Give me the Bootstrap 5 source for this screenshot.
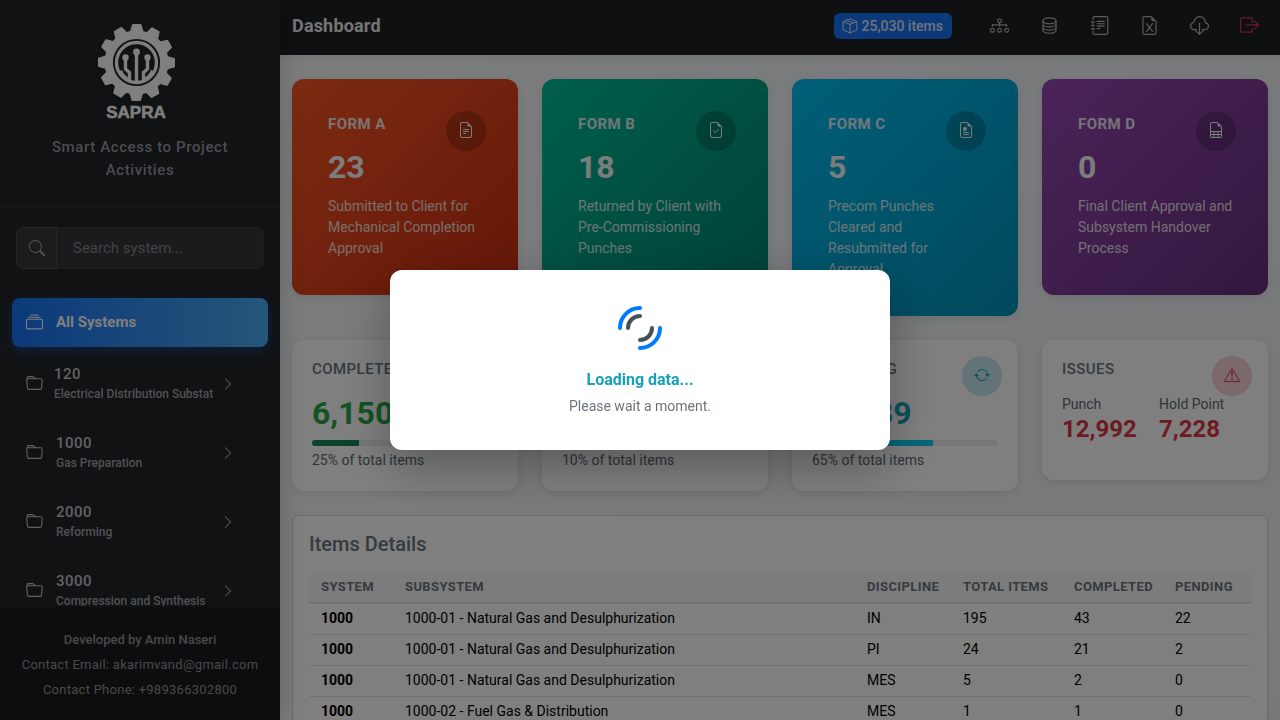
<!DOCTYPE html>
<html lang="en">
<head>
<meta charset="utf-8">
<meta name="viewport" content="width=device-width, initial-scale=1">
<title>SAPRA Dashboard</title>
<link href="https://cdn.jsdelivr.net/npm/bootstrap@5.3.0/dist/css/bootstrap.min.css" rel="stylesheet">
<style>
  body { font-family: Roboto, "Liberation Sans", sans-serif; background: #f8f9fa; }
  .icon { width: 16px; height: 16px; fill: currentColor; flex-shrink: 0; display: block; }
  .icon-lg { width: 19px; height: 19px; }

  .side-bar { width: 280px; background: #212529; box-shadow: 4px 0 20px rgba(0,0,0,.15); z-index: 2; }
  .side-head { padding: 24px 24px; background: linear-gradient(135deg, #1f2327, #212529); border-bottom: 1px solid #32363a; }
  .side-logo { width: 84px; height: 96px; overflow: visible; }
  .tagline { font-size: 15px; line-height: 23px; font-weight: 500; letter-spacing: .04em; color: #96999f; margin: 16px 0 0; }
  .side-search { padding: 20px 16px 12px; border-bottom: 1px solid #2b2f33; }
  .side-search .input-group-text { width: 41px; padding: 0 0 0 12px; background: #35383b; border-color: #4a4d50; color: #a4a7aa; border-radius: 8px; }
  .side-search .form-control { height: 42px; padding: 0 16px; font-size: 15px; background: #35373a; border-color: #393c3f; border-left-color: #4a4d50; color: #ddd; border-radius: 8px; }
  .side-search .form-control::placeholder { color: #84868a; opacity: 1; }
  .side-nav { padding: 16px 12px 0; min-height: 0; }
  .side-link { display: flex; align-items: center; padding: 0 14px; height: 69px; color: #c2c4c6; text-decoration: none; }
  .side-link .icon { width: 17px; height: 17px; margin-right: 13px; }
  .side-link.tight .icon:first-child { margin-right: 11px; }
  .side-link .icon.chev { width: 14px; height: 14px; margin: 0 19px 0 8px; }
  .side-link.active { height: 49px; margin-bottom: 2px; color: #fff; font-size: 15px; font-weight: 700; border-radius: 8px; background: linear-gradient(90deg, #1873f5, #4cacf2); box-shadow: 0 4px 12px rgba(24,115,245,.35); }
  .sys-label { flex: 1; min-width: 0; overflow: hidden; white-space: nowrap; }
  .sys-code { display: block; font-size: 15px; line-height: 20px; font-weight: 500; letter-spacing: .03em; }
  .sys-name { display: block; font-size: 12px; line-height: 20px; font-weight: 500; color: #a0a3a6; }
  .side-foot { padding: 20px 8px 18px; background: #191b1e; border-top: 1px solid #222529; font-size: 13px; line-height: 25px; color: #909396; text-align: center; }
  .side-foot p { margin: 0; }
  .side-foot .fw-medium { letter-spacing: 0; font-weight: 500; }
  .side-foot .spaced { letter-spacing: .02em; }

  .top-bar { height: 55px; padding: 0 12px 3px; background: #1d2023; box-shadow: 0 2px 10px rgba(0,0,0,.08); }
  .top-bar h1 { font-size: 18px; line-height: 24px; font-weight: 700; letter-spacing: .01em; color: #e9eaeb; margin: 0; }
  .items-badge { height: 26px; padding: 0 9px 0 8px; border-radius: 6px; background: #1873f5; color: #dfe8f5; font-size: 14px; font-weight: 500; gap: 3px; margin-right: 27px; }
  .tool-btn { width: 40px; height: 40px; padding: 0 0 2px; margin-left: 10px; border: 0; background: none; color: #b4b7ba; display: flex; align-items: center; justify-content: center; }
  .tool-btn.exit { color: #dc3545; margin-right: -1px; }

  .main-pane { min-width: 0; background: linear-gradient(135deg, #f8f9fa, #eef1f5); }
  .content-pane { padding: 24px 12px; min-height: 0; }
  .tile { border-radius: 12px; box-shadow: 0 2px 8px rgba(0,0,0,.1); position: relative; }
  .tile h2 { font-size: 15px; line-height: 18px; font-weight: 500; letter-spacing: .03em; margin: 0 0 16px; }
  .tile-num { font-size: 32px; line-height: 38px; font-weight: 700; }
  .tile-note { font-size: 14px; line-height: 21px; }
  .tile-icon { position: absolute; width: 40px; height: 40px; border-radius: 50%; display: flex; align-items: center; justify-content: center; padding-bottom: 2px; }
  .form-tile { padding: 36px 34px 36px 36px; color: #f8f8f8; }
  .form-tile h2 { font-weight: 700; opacity: .9; margin-bottom: 15px; }
  .form-tile .tile-note { margin-top: 10px; opacity: .85; }
  .form-tile .tile-icon { top: 32px; right: 32px; background: rgba(0,0,0,.2); }
  .tone-a { background: linear-gradient(135deg, #fa5624, #c92f12); }
  .tone-b { background: linear-gradient(135deg, #00bf97, #008270); }
  .tone-c { background: linear-gradient(135deg, #00bff2, #0091b8); }
  .tone-d { background: linear-gradient(135deg, #9648b4, #662e7c); }
  .stat-tile { padding: 20px; background: #fff; color: #606870; }
  .stat-tile h2 { color: #6c757d; }
  .stat-tile .tile-icon { top: 16px; right: 16px; }
  .stat-tile .progress { height: 6px; margin: 8px 0 4px; }
  .issue-num { font-size: 24px; line-height: 29px; font-weight: 700; color: #dc3545; margin-bottom: 16px; }
  .c-done { color: #28a745; } .c-pend { color: #ffc107; } .c-left { color: #17a2b8; } .c-issue { color: #dc3545; }
  .bg-done { background: rgba(40,167,69,.2); } .bg-pend { background: rgba(255,193,7,.2); } .bg-left { background: rgba(23,162,184,.25); } .bg-issue { background: rgba(220,53,69,.22); }

  .detail-card { padding: 16px; border: 1px solid #d3d5d7; border-radius: 6px; background: #fff; }
  .detail-card h2 { font-size: 20px; line-height: 24px; font-weight: 500; color: #6c757d; margin: 0 0 16px; }
  .detail-table { table-layout: fixed; font-size: 14px; line-height: 20px; margin: 0; }
  .detail-table th, .detail-table td { padding: 4px 12px 6px; color: #000; white-space: nowrap; }
  .detail-table thead th { padding: 5px 12px; font-size: 13px; letter-spacing: .03em; color: #6c757d; background: #f8f9fa; border-bottom: 2px solid #e4e6e8; }
  .detail-table thead th:first-child { border-top-left-radius: 8px; }
  .w-sys { width: 84px; } .w-dis { width: 96px; } .w-tot { width: 111px; } .w-com { width: 101px; } .w-pen { width: 88px; }

  .veil { background: rgba(0,0,0,.5); z-index: 1050; }
  .load-box { width: 500px; max-width: 92%; padding: 34px 32px 33px; border-radius: 12px; background: #fff; box-shadow: 0 16px 48px rgba(0,0,0,.3); text-align: center; }
  .load-box svg { width: 48px; height: 48px; display: block; margin: 0 auto 16px; }
  .load-box h2 { font-size: 16px; line-height: 24px; font-weight: 700; color: #17a2b8; margin: 0 0 4px; }
  .load-box p { font-size: 14px; line-height: 21px; color: #6c757d; margin: 0; }
</style>
</head>
<body class="overflow-hidden">

<svg class="d-none" xmlns="http://www.w3.org/2000/svg">
  <symbol id="i-search" viewBox="0 0 16 16"><path d="M11.742 10.344a6.5 6.5 0 1 0-1.397 1.398h-.001c.03.04.062.078.098.115l3.85 3.85a1 1 0 0 0 1.415-1.414l-3.85-3.85a1.007 1.007 0 0 0-.115-.1zM12 6.5a5.5 5.5 0 1 1-11 0 5.5 5.5 0 0 1 11 0z"/></symbol>
  <symbol id="i-collection" viewBox="0 0 16 16"><path d="M2.5 3.5a.5.5 0 0 1 0-1h11a.5.5 0 0 1 0 1h-11zm2-2a.5.5 0 0 1 0-1h7a.5.5 0 0 1 0 1h-7zM0 13a1.5 1.5 0 0 0 1.5 1.5h13A1.5 1.5 0 0 0 16 13V6a1.5 1.5 0 0 0-1.5-1.5h-13A1.5 1.5 0 0 0 0 6v7zm1.5.5A.5.5 0 0 1 1 13V6a.5.5 0 0 1 .5-.5h13a.5.5 0 0 1 .5.5v7a.5.5 0 0 1-.5.5h-13z"/></symbol>
  <symbol id="i-folder" viewBox="0 0 16 16"><path d="M.54 3.87.5 3a2 2 0 0 1 2-2h3.672a2 2 0 0 1 1.414.586l.828.828A2 2 0 0 0 9.828 3h3.982a2 2 0 0 1 1.992 2.181l-.637 7A2 2 0 0 1 13.174 14H2.826a2 2 0 0 1-1.991-1.819l-.637-7a1.99 1.99 0 0 1 .342-1.31zM2.19 4a1 1 0 0 0-.996 1.09l.637 7a1 1 0 0 0 .995.91h10.348a1 1 0 0 0 .995-.91l.637-7A1 1 0 0 0 13.81 4H2.19zm4.69-1.707A1 1 0 0 0 6.172 2H2.5a1 1 0 0 0-1 .981l.006.139C1.72 3.042 1.95 3 2.19 3h5.396l-.707-.707z"/></symbol>
  <symbol id="i-chevron" viewBox="0 0 16 16"><path d="M4.646 1.646a.5.5 0 0 1 .708 0l6 6a.5.5 0 0 1 0 .708l-6 6a.5.5 0 0 1-.708-.708L10.293 8 4.646 2.354a.5.5 0 0 1 0-.708z"/></symbol>
  <symbol id="i-box" viewBox="0 0 16 16"><path d="M8 .9 14.900 3.600v8.200L8 15.100 1.100 11.800V3.600zM1.100 3.600 8 6.400l6.900-2.800M8 6.400v8.700M4.600 2.300l6.800 2.700" fill="none" stroke="currentColor" stroke-linejoin="round"/></symbol>
  <symbol id="i-tree" viewBox="0 0 16 16"><g fill="none" stroke="currentColor"><rect x="6.5" y="2.5" width="3" height="3" rx="1"/><rect x=".5" y="10.5" width="3" height="3" rx="1"/><rect x="6.5" y="10.5" width="3" height="3" rx="1"/><rect x="12.5" y="10.5" width="3" height="3" rx="1"/><path d="M8 5.5v3M2 8.700V7.500h12v1.200" stroke-linecap="round"/></g></symbol>
  <symbol id="i-database" viewBox="0 0 16 16"><g fill="none" stroke="currentColor"><ellipse cx="8" cy="4" rx="5.5" ry="2.5"/><path d="M2.5 4v8c0 1.400 2.500 2.500 5.500 2.500s5.500-1.100 5.500-2.500V4M2.500 6.700c0 1.400 2.500 2.500 5.500 2.500s5.500-1.100 5.500-2.500M2.500 9.400c0 1.400 2.500 2.500 5.500 2.500s5.500-1.100 5.500-2.500"/></g></symbol>
  <symbol id="i-journal" viewBox="0 0 16 16"><g fill="none" stroke="currentColor" stroke-linecap="round"><path d="M2.500 3V2A1.500 1.500 0 0 1 4 .5h9.500A1.500 1.500 0 0 1 15 2v12a1.500 1.500 0 0 1-1.500 1.500H4A1.500 1.500 0 0 1 2.500 14v-1M2.500 5v1M2.500 7.500v1M2.500 10v1M1.300 5h2.400M1.300 8h2.400M1.300 11h2.400M6 4.500h6M6 6.500h6M6 8.500h6M6 10.500h2.500"/></g></symbol>
  <symbol id="i-file" viewBox="0 0 16 16"><path d="M9.500 0H4a2 2 0 0 0-2 2v12a2 2 0 0 0 2 2h8a2 2 0 0 0 2-2V4.500L9.500 0zm0 1v2A1.500 1.500 0 0 0 11 4.500h2V14a1 1 0 0 1-1 1H4a1 1 0 0 1-1-1V2a1 1 0 0 1 1-1h5.500z"/></symbol>
  <symbol id="i-file-x" viewBox="0 0 16 16"><use href="#i-file"/><path d="m5.500 6.500 5 6.500M10.500 6.500l-5 6.500" fill="none" stroke="currentColor" stroke-linecap="round"/></symbol>
  <symbol id="i-file-text" viewBox="0 0 16 16"><use href="#i-file"/><path d="M5.500 7.500h5M5.500 9.500h5M5.500 11.500h2" fill="none" stroke="currentColor" stroke-linecap="round"/></symbol>
  <symbol id="i-file-check" viewBox="0 0 16 16"><use href="#i-file"/><path d="M5.500 9 7.300 10.700l3.200-3.300" fill="none" stroke="currentColor" stroke-linecap="round"/></symbol>
  <symbol id="i-file-post" viewBox="0 0 16 16"><use href="#i-file"/><circle cx="7" cy="7" r="2"/><path d="M5.500 10.500h5M5.500 12.500h5" fill="none" stroke="currentColor" stroke-linecap="round"/></symbol>
  <symbol id="i-file-grid" viewBox="0 0 16 16"><use href="#i-file"/><path d="M2.500 9.500h11M2.500 12.500h11M6 9.500v6M10 9.500v6" fill="none" stroke="currentColor"/></symbol>
  <symbol id="i-cloud" viewBox="0 0 16 16"><path d="M5.500 11.500H3.600A3.100 3.100 0 0 1 .5 8.500c0-1.500 1.100-2.700 2.600-3C3.300 3.200 5.400 .5 8 .5c2.500 0 4.600 1.800 4.900 5.100 1.500.2 2.600 1.400 2.600 2.900a3 3 0 0 1-3 3h-2M8 6v9.300M5 12.500l3 3 3-3" fill="none" stroke="currentColor" stroke-linecap="round" stroke-linejoin="round"/></symbol>
  <symbol id="i-exit" viewBox="0 0 16 16"><path d="M10.500 5V2.500a1 1 0 0 0-1-1h-8a1 1 0 0 0-1 1v10a1 1 0 0 0 1 1h8a1 1 0 0 0 1-1V10.500M5.500 7.500h10M12.500 4.500l3 3-3 3" fill="none" stroke="currentColor" stroke-linecap="round" stroke-linejoin="round"/></symbol>
  <symbol id="i-cycle" viewBox="0 0 16 16"><path d="M11.534 7h3.932a.25.25 0 0 1 .192.410l-1.966 2.360a.25.25 0 0 1-.384 0l-1.966-2.360a.25.25 0 0 1 .192-.410zm-11 2h3.932a.25.25 0 0 0 .192-.410L2.692 6.230a.25.25 0 0 0-.384 0L.342 8.590A.25.25 0 0 0 .534 9z"/><path d="M8 3c-1.552 0-2.940.707-3.857 1.818a.5.5 0 1 1-.771-.636A6.002 6.002 0 0 1 13.917 7H12.900A5.002 5.002 0 0 0 8 3zM3.100 9a5.002 5.002 0 0 0 8.757 2.182.5.5 0 1 1 .771.636A6.002 6.002 0 0 1 2.083 9H3.100z"/></symbol>
  <symbol id="i-warn" viewBox="0 0 16 16"><path d="M8 1.700 15.400 13.800a.4.4 0 0 1-.3.700H.9a.4.4 0 0 1-.3-.7z" fill="none" stroke="currentColor" stroke-linejoin="round"/><path d="M7.100 5.500a.9.900 0 0 1 1.800 0l-.35 4a.55.550 0 0 1-1.100 0zM7 12a1 1 0 1 1 2 0 1 1 0 0 1-2 0z"/></symbol>
  <symbol id="i-check" viewBox="0 0 16 16"><path d="M8 .5a7.500 7.500 0 1 0 0 15 7.500 7.500 0 0 0 0-15M5 8.200l2.200 2.200L11 5.800" fill="none" stroke="currentColor" stroke-linecap="round"/></symbol>
  <symbol id="i-clock" viewBox="0 0 16 16"><path d="M8 .5a7.500 7.500 0 1 0 0 15 7.500 7.500 0 0 0 0-15M8 4v4.500l3 1.700" fill="none" stroke="currentColor" stroke-linecap="round"/></symbol>
</svg>

<div class="d-flex vh-100">
  <aside class="side-bar d-flex flex-column flex-shrink-0">
    <div class="side-head text-center">
      <svg class="side-logo" viewBox="0 0 84 96" role="img" aria-label="SAPRA logo">
        <defs><path id="tooth" d="M31.500 9.500 34 .8Q34.200 0 35 0h7.500q.8 0 1 .8L46 9.500z"/></defs>
        <g fill="#fff">
          <circle cx="38.500" cy="38.500" r="27.800" fill="none" stroke="#fff" stroke-width="8.400"/>
          <use href="#tooth"/><use href="#tooth" transform="rotate(30 38.500 38.500)"/><use href="#tooth" transform="rotate(60 38.500 38.500)"/><use href="#tooth" transform="rotate(90 38.500 38.500)"/><use href="#tooth" transform="rotate(120 38.500 38.500)"/><use href="#tooth" transform="rotate(150 38.500 38.500)"/><use href="#tooth" transform="rotate(180 38.500 38.500)"/><use href="#tooth" transform="rotate(210 38.500 38.500)"/><use href="#tooth" transform="rotate(240 38.500 38.500)"/><use href="#tooth" transform="rotate(270 38.500 38.500)"/><use href="#tooth" transform="rotate(300 38.500 38.500)"/><use href="#tooth" transform="rotate(330 38.500 38.500)"/>
          <circle cx="38.500" cy="38.500" r="20" fill="none" stroke="#fff" stroke-width="3.400"/>
          <circle cx="38.500" cy="28" r="3.400"/><circle cx="27.500" cy="33.500" r="3.200"/><circle cx="49.500" cy="33.500" r="3.200"/>
          <path d="M38.500 28v32M27.500 34v11l4 3.500V57M49.500 34v11l-4 3.500V57" fill="none" stroke="#fff" stroke-width="3.400"/>
          <path d="M21 47q4 8 12 11v-3q-7-3-9-9zM56 47q-4 8-12 11v-3q7-3 9-9z"/>
          <text x="38" y="94" text-anchor="middle" font-family="Liberation Sans, Arial, sans-serif" font-weight="700" font-size="17" stroke="#fff" stroke-width=".5">SAPRA</text>
        </g>
      </svg>
      <p class="tagline">Smart Access to Project Activities</p>
    </div>
    <div class="side-search">
      <div class="input-group">
        <label class="input-group-text" for="sysSearch" aria-label="Search"><svg class="icon"><use href="#i-search"/></svg></label>
        <input class="form-control" id="sysSearch" type="text" placeholder="Search system...">
      </div>
    </div>
    <nav class="side-nav flex-grow-1 overflow-hidden">
      <a class="side-link active" href="#"><svg class="icon"><use href="#i-collection"/></svg>All Systems</a>
      <a class="side-link tight" href="#"><svg class="icon"><use href="#i-folder"/></svg><span class="sys-label"><span class="sys-code">120</span><span class="sys-name">Electrical Distribution Substation</span></span><svg class="icon chev"><use href="#i-chevron"/></svg></a>
      <a class="side-link" href="#"><svg class="icon"><use href="#i-folder"/></svg><span class="sys-label"><span class="sys-code">1000</span><span class="sys-name">Gas Preparation</span></span><svg class="icon chev"><use href="#i-chevron"/></svg></a>
      <a class="side-link" href="#"><svg class="icon"><use href="#i-folder"/></svg><span class="sys-label"><span class="sys-code">2000</span><span class="sys-name">Reforming</span></span><svg class="icon chev"><use href="#i-chevron"/></svg></a>
      <a class="side-link" href="#"><svg class="icon"><use href="#i-folder"/></svg><span class="sys-label"><span class="sys-code">3000</span><span class="sys-name">Compression and Synthesis</span></span><svg class="icon chev"><use href="#i-chevron"/></svg></a>
    </nav>
    <footer class="side-foot">
      <p class="fw-medium">Developed by Amin Naseri</p>
      <p class="spaced">Contact Email: akarimvand@gmail.com</p>
      <p class="spaced">Contact Phone: +989366302800</p>
    </footer>
  </aside>

  <div class="main-pane flex-grow-1 d-flex flex-column">
    <header class="top-bar d-flex align-items-center flex-shrink-0">
      <h1 class="me-auto">Dashboard</h1>
      <span class="items-badge d-flex align-items-center"><svg class="icon"><use href="#i-box"/></svg>25,030 items</span>
      <div class="d-flex">
        <button class="tool-btn ms-0" type="button" aria-label="Hierarchy"><svg class="icon icon-lg"><use href="#i-tree"/></svg></button>
        <button class="tool-btn" type="button" aria-label="Database"><svg class="icon icon-lg"><use href="#i-database"/></svg></button>
        <button class="tool-btn" type="button" aria-label="Journal"><svg class="icon icon-lg"><use href="#i-journal"/></svg></button>
        <button class="tool-btn" type="button" aria-label="Export to spreadsheet"><svg class="icon icon-lg"><use href="#i-file-x"/></svg></button>
        <button class="tool-btn" type="button" aria-label="Download"><svg class="icon icon-lg"><use href="#i-cloud"/></svg></button>
        <button class="tool-btn exit" type="button" aria-label="Log out"><svg class="icon icon-lg"><use href="#i-exit"/></svg></button>
      </div>
    </header>

    <main class="content-pane flex-grow-1 overflow-hidden">
      <div class="row row-cols-4 align-items-start mb-4">
        <div class="col"><section class="tile form-tile tone-a"><h2>FORM A</h2><div class="tile-num">23</div><div class="tile-note">Submitted to Client for Mechanical Completion Approval</div><span class="tile-icon"><svg class="icon"><use href="#i-file-text"/></svg></span></section></div>
        <div class="col"><section class="tile form-tile tone-b"><h2>FORM B</h2><div class="tile-num">18</div><div class="tile-note">Returned by Client with Pre-Commissioning Punches</div><span class="tile-icon"><svg class="icon"><use href="#i-file-check"/></svg></span></section></div>
        <div class="col"><section class="tile form-tile tone-c"><h2>FORM C</h2><div class="tile-num">5</div><div class="tile-note">Precom Punches Cleared and Resubmitted for Approval</div><span class="tile-icon"><svg class="icon"><use href="#i-file-post"/></svg></span></section></div>
        <div class="col"><section class="tile form-tile tone-d"><h2>FORM D</h2><div class="tile-num">0</div><div class="tile-note">Final Client Approval and Subsystem Handover Process</div><span class="tile-icon"><svg class="icon"><use href="#i-file-grid"/></svg></span></section></div>
      </div>

      <div class="row row-cols-4 align-items-start mb-4">
        <div class="col"><section class="tile stat-tile"><h2>COMPLETED</h2><div class="tile-num c-done">6,150</div><div class="progress"><div class="progress-bar bg-success" style="width:25%"></div></div><div class="tile-note">25% of total items</div><span class="tile-icon c-done bg-done"><svg class="icon"><use href="#i-check"/></svg></span></section></div>
        <div class="col"><section class="tile stat-tile"><h2>PENDING</h2><div class="tile-num c-pend">2,591</div><div class="progress"><div class="progress-bar bg-warning" style="width:10%"></div></div><div class="tile-note">10% of total items</div><span class="tile-icon c-pend bg-pend"><svg class="icon"><use href="#i-clock"/></svg></span></section></div>
        <div class="col"><section class="tile stat-tile"><h2>REMAINING</h2><div class="tile-num c-left">16,289</div><div class="progress"><div class="progress-bar bg-info" style="width:65%"></div></div><div class="tile-note">65% of total items</div><span class="tile-icon c-left bg-left"><svg class="icon"><use href="#i-cycle"/></svg></span></section></div>
        <div class="col"><section class="tile stat-tile"><h2>ISSUES</h2>
          <div class="row g-2 mt-0">
            <div class="col-6 mt-0"><div class="tile-note">Punch</div><div class="issue-num">12,992</div></div>
            <div class="col-6 mt-0"><div class="tile-note">Hold Point</div><div class="issue-num">7,228</div></div>
          </div>
          <span class="tile-icon c-issue bg-issue"><svg class="icon"><use href="#i-warn"/></svg></span></section></div>
      </div>

      <section class="detail-card">
        <h2>Items Details</h2>
        <table class="table detail-table">
          <colgroup><col class="w-sys"><col><col class="w-dis"><col class="w-tot"><col class="w-com"><col class="w-pen"></colgroup>
          <thead><tr><th>SYSTEM</th><th>SUBSYSTEM</th><th>DISCIPLINE</th><th>TOTAL ITEMS</th><th>COMPLETED</th><th>PENDING</th></tr></thead>
          <tbody>
            <tr><th>1000</th><td>1000-01 - Natural Gas and Desulphurization</td><td>IN</td><td>195</td><td>43</td><td>22</td></tr>
            <tr><th>1000</th><td>1000-01 - Natural Gas and Desulphurization</td><td>PI</td><td>24</td><td>21</td><td>2</td></tr>
            <tr><th>1000</th><td>1000-01 - Natural Gas and Desulphurization</td><td>MES</td><td>5</td><td>2</td><td>0</td></tr>
            <tr><th>1000</th><td>1000-02 - Fuel Gas &amp; Distribution</td><td>MES</td><td>1</td><td>1</td><td>0</td></tr>
          </tbody>
        </table>
      </section>
    </main>
  </div>
</div>

<div class="veil position-fixed top-0 start-0 w-100 h-100 d-flex align-items-center justify-content-center" role="dialog" aria-modal="true" aria-labelledby="loadTitle">
  <div class="load-box">
    <svg viewBox="0 0 48 48" fill="none" stroke-width="4" stroke-linecap="round" aria-hidden="true">
      <path d="M4 24A20 20 0 0 1 24 4M44 24A20 20 0 0 1 24 44" stroke="#007bff"/>
      <path d="M12 24A12 12 0 0 1 24 12M36 24A12 12 0 0 1 24 36" stroke="#495057"/>
    </svg>
    <h2 id="loadTitle">Loading data...</h2>
    <p>Please wait a moment.</p>
  </div>
</div>
<script src="https://cdn.jsdelivr.net/npm/bootstrap@5.3.0/dist/js/bootstrap.bundle.min.js"></script>
</body>
</html>
